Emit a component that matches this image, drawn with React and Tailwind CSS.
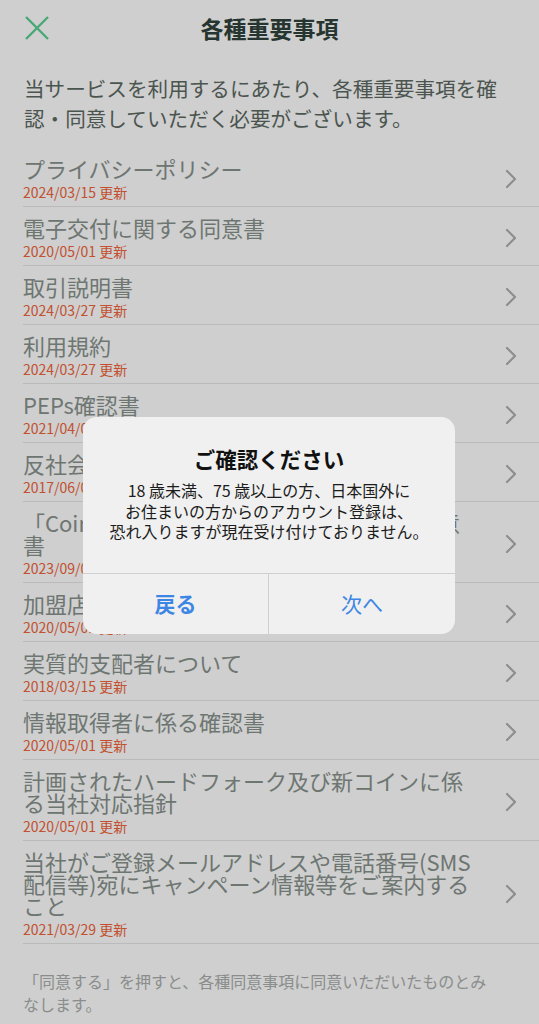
/* ─── DATA ─────────────────────────────────────────── */
const docs = [
  { title: "プライバシーポリシー", date: "2024/03/15" },
  { title: "電子交付に関する同意書", date: "2020/05/01" },
  { title: "取引説明書", date: "2024/03/27" },
  { title: "利用規約", date: "2024/03/27" },
  { title: "PEPs確認書", date: "2021/04/01" },
  { title: "反社会的勢力の排除に関する同意書", date: "2017/06/01" },
  { title: "「Coincheckつみたて」の利用に関する同意書", date: "2023/09/01" },
  { title: "加盟店規約", date: "2020/05/01" },
  { title: "実質的支配者について", date: "2018/03/15" },
  { title: "情報取得者に係る確認書", date: "2020/05/01" },
  { title: "計画されたハードフォーク及び新コインに係る当社対応指針", date: "2020/05/01" },
  {
    title: "当社がご登録メールアドレスや電話番号(SMS配信等)宛にキャンペーン情報等をご案内すること",
    date: "2021/03/29",
  },
];

const font = "font-['Noto_Sans_CJK_JP',sans-serif]";

/* ─── SUB-COMPONENTS ───────────────────────────────── */

function CloseIcon() {
  return (
    <svg width="26" height="26" viewBox="0 0 26 26" className="block">
      <path d="M2 2 L24 24 M24 2 L2 24" stroke="#5bcf93" strokeWidth="2.4" fill="none" />
    </svg>
  );
}

function Chevron() {
  return (
    <svg width="12" height="20" viewBox="0 0 12 20" className="block shrink-0">
      <path d="M2 2 L10 10 L2 18" stroke="#afafaf" strokeWidth="2.2" fill="none" strokeLinecap="round" strokeLinejoin="round" />
    </svg>
  );
}

function DocRow({ title, date }) {
  return (
    <li className="ml-[23px] border-b border-[#e7e7e7]">
      <a href="#" className="flex items-center pt-[9px] pb-[6px] leading-none">
        <div className="w-[455px]">
          <div className="text-[22px] leading-[22px] text-[#88928d]">{title}</div>
          <div className="mt-[5px] text-[14px] leading-[16px] text-[#f0633a]">{date} 更新</div>
        </div>
        <div className="ml-auto mr-[22px]">
          <Chevron />
        </div>
      </a>
    </li>
  );
}

/* ─── MAIN ──────────────────────────────────────────── */
export default function App() {
  return (
    <div className={`relative min-h-[1024px] overflow-hidden bg-white ${font}`}>
      {/* header */}
      <header className="grid h-[56px] grid-cols-[1fr_auto_1fr] items-center">
        <div className="pl-[24px]">
          <CloseIcon />
        </div>
        <h1 className="text-[23px] font-semibold leading-none text-[#2f423a]">各種重要事項</h1>
        <div />
      </header>

      <p className="mt-[17px] px-[24px] text-[20.6px] leading-[30px] text-[#5d6963]">
        当サービスを利用するにあたり、各種重要事項を確認・同意していただく必要がございます。
      </p>

      <ul className="mt-[15px]">
        {docs.map((d) => (
          <DocRow key={d.title} {...d} />
        ))}
      </ul>

      <p className="mt-[26px] pl-[23px] pr-[40px] text-[16px] leading-[23px] text-[#aaaeac]">
        「同意する」を押すと、各種同意事項に同意いただいたものとみなします。
      </p>

      {/* dim overlay */}
      <div className="absolute inset-0 bg-black/[0.19]" />

      {/* alert */}
      <div className="absolute left-[83px] top-[417px] w-[372px] overflow-hidden rounded-[14px] bg-[#f0f0f0]">
        <div className="px-4 pt-[28px] pb-[31px] text-center">
          <h2 className="text-[21.5px] font-bold leading-[28px] text-[#111]">ご確認ください</h2>
          <p className="mt-[7px] text-[16px] leading-[20.5px] text-[#1c1c1c]">
            18 歳未満、75 歳以上の方、日本国外に
            <br />
            お住まいの方からのアカウント登録は、
            <br />
            恐れ入りますが現在受け付けておりません。
          </p>
        </div>
        <div className="grid h-[61px] grid-cols-2 border-t border-[#cfcfcf]">
          <button className="border-r border-[#cfcfcf] text-[21px] font-bold text-[#3d86e4]">戻る</button>
          <button className="text-[21px] text-[#3d86e4]">次へ</button>
        </div>
      </div>
    </div>
  );
}
